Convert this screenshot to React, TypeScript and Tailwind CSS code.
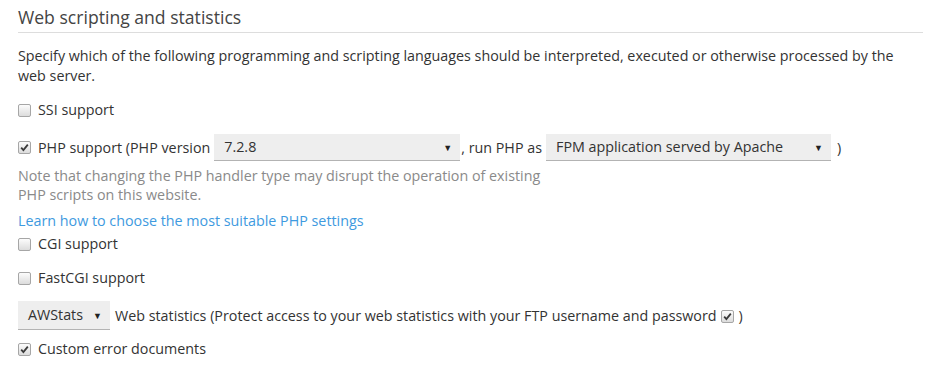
function Box({ checked = false }: { checked?: boolean }) {
  return (
    <span className="inline-flex h-[13px] w-[13px] shrink-0 items-center justify-center rounded-[2px] border border-[#a6a6a6] bg-gradient-to-b from-[#fcfcfc] to-[#dcdcdc]">
      {checked && (
        <svg width="9" height="9" viewBox="0 0 9 9">
          <path d="M1.2 4.6 L3.4 7 L7.8 1.6" fill="none" stroke="#3a3a3a" strokeWidth="1.8" />
        </svg>
      )}
    </span>
  );
}

function Select({ value, className }: { value: string; className: string }) {
  return (
    <span
      className={`inline-flex h-[27px] items-center justify-between border-b border-[#b3b3b3] bg-[#eeeeee] pl-[10px] pr-[8px] text-[#333] ${className}`}
    >
      <span>{value}</span>
      <span className="text-[9px] leading-none text-[#222]">▼</span>
    </span>
  );
}

function Row({ checked, label }: { checked?: boolean; label: string }) {
  return (
    <div className="flex items-center gap-[7px]">
      <Box checked={checked} />
      <span>{label}</span>
    </div>
  );
}

export default function App() {
  return (
    <div className="h-[373px] w-[932px] bg-white px-[18px] font-['Open_Sans',sans-serif] text-[14.3px] leading-[20px] text-[#333]">
      <h2 className="-mr-[9px] border-b border-[#dddddd] pt-[5px] pb-[3px] text-[17.6px] leading-[24px] text-[#444]">
        Web scripting and statistics
      </h2>
      <p className="mt-[13px] pr-[10px]">
        Specify which of the following programming and scripting languages should be interpreted, executed or otherwise processed by the web server.
      </p>
      <div className="mt-[14px]">
        <Row label="SSI support" />
      </div>
      <div className="mt-[14px] flex items-center">
        <Box checked />
        <span className="ml-[7px]">PHP support (PHP version</span>
        <Select value="7.2.8" className="ml-[4px] w-[246px]" />
        <span className="ml-[1px]">, run PHP as</span>
        <Select value="FPM application served by Apache" className="ml-[4px] w-[285px]" />
        <span className="ml-[6px]">)</span>
      </div>
      <p className="mt-[5px] w-[550px] leading-[19px] text-[#8a8a8a]">
        Note that changing the PHP handler type may disrupt the operation of existing PHP scripts on this website.
      </p>
      <a className="mt-[7px] block text-[#3e9ae0]">Learn how to choose the most suitable PHP settings</a>
      <div className="mt-[3px]">
        <Row label="CGI support" />
      </div>
      <div className="mt-[14px]">
        <Row label="FastCGI support" />
      </div>
      <div className="mt-[13px] flex items-center">
        <Select value="AWStats" className="h-[29px] w-[92px]" />
        <span className="ml-[5px]">Web statistics (Protect access to your web statistics with your FTP username and password</span>
        <span className="ml-[4px]"><Box checked /></span>
        <span className="ml-[5px]">)</span>
      </div>
      <div className="mt-[9px]">
        <Row checked label="Custom error documents" />
      </div>
    </div>
  );
}
